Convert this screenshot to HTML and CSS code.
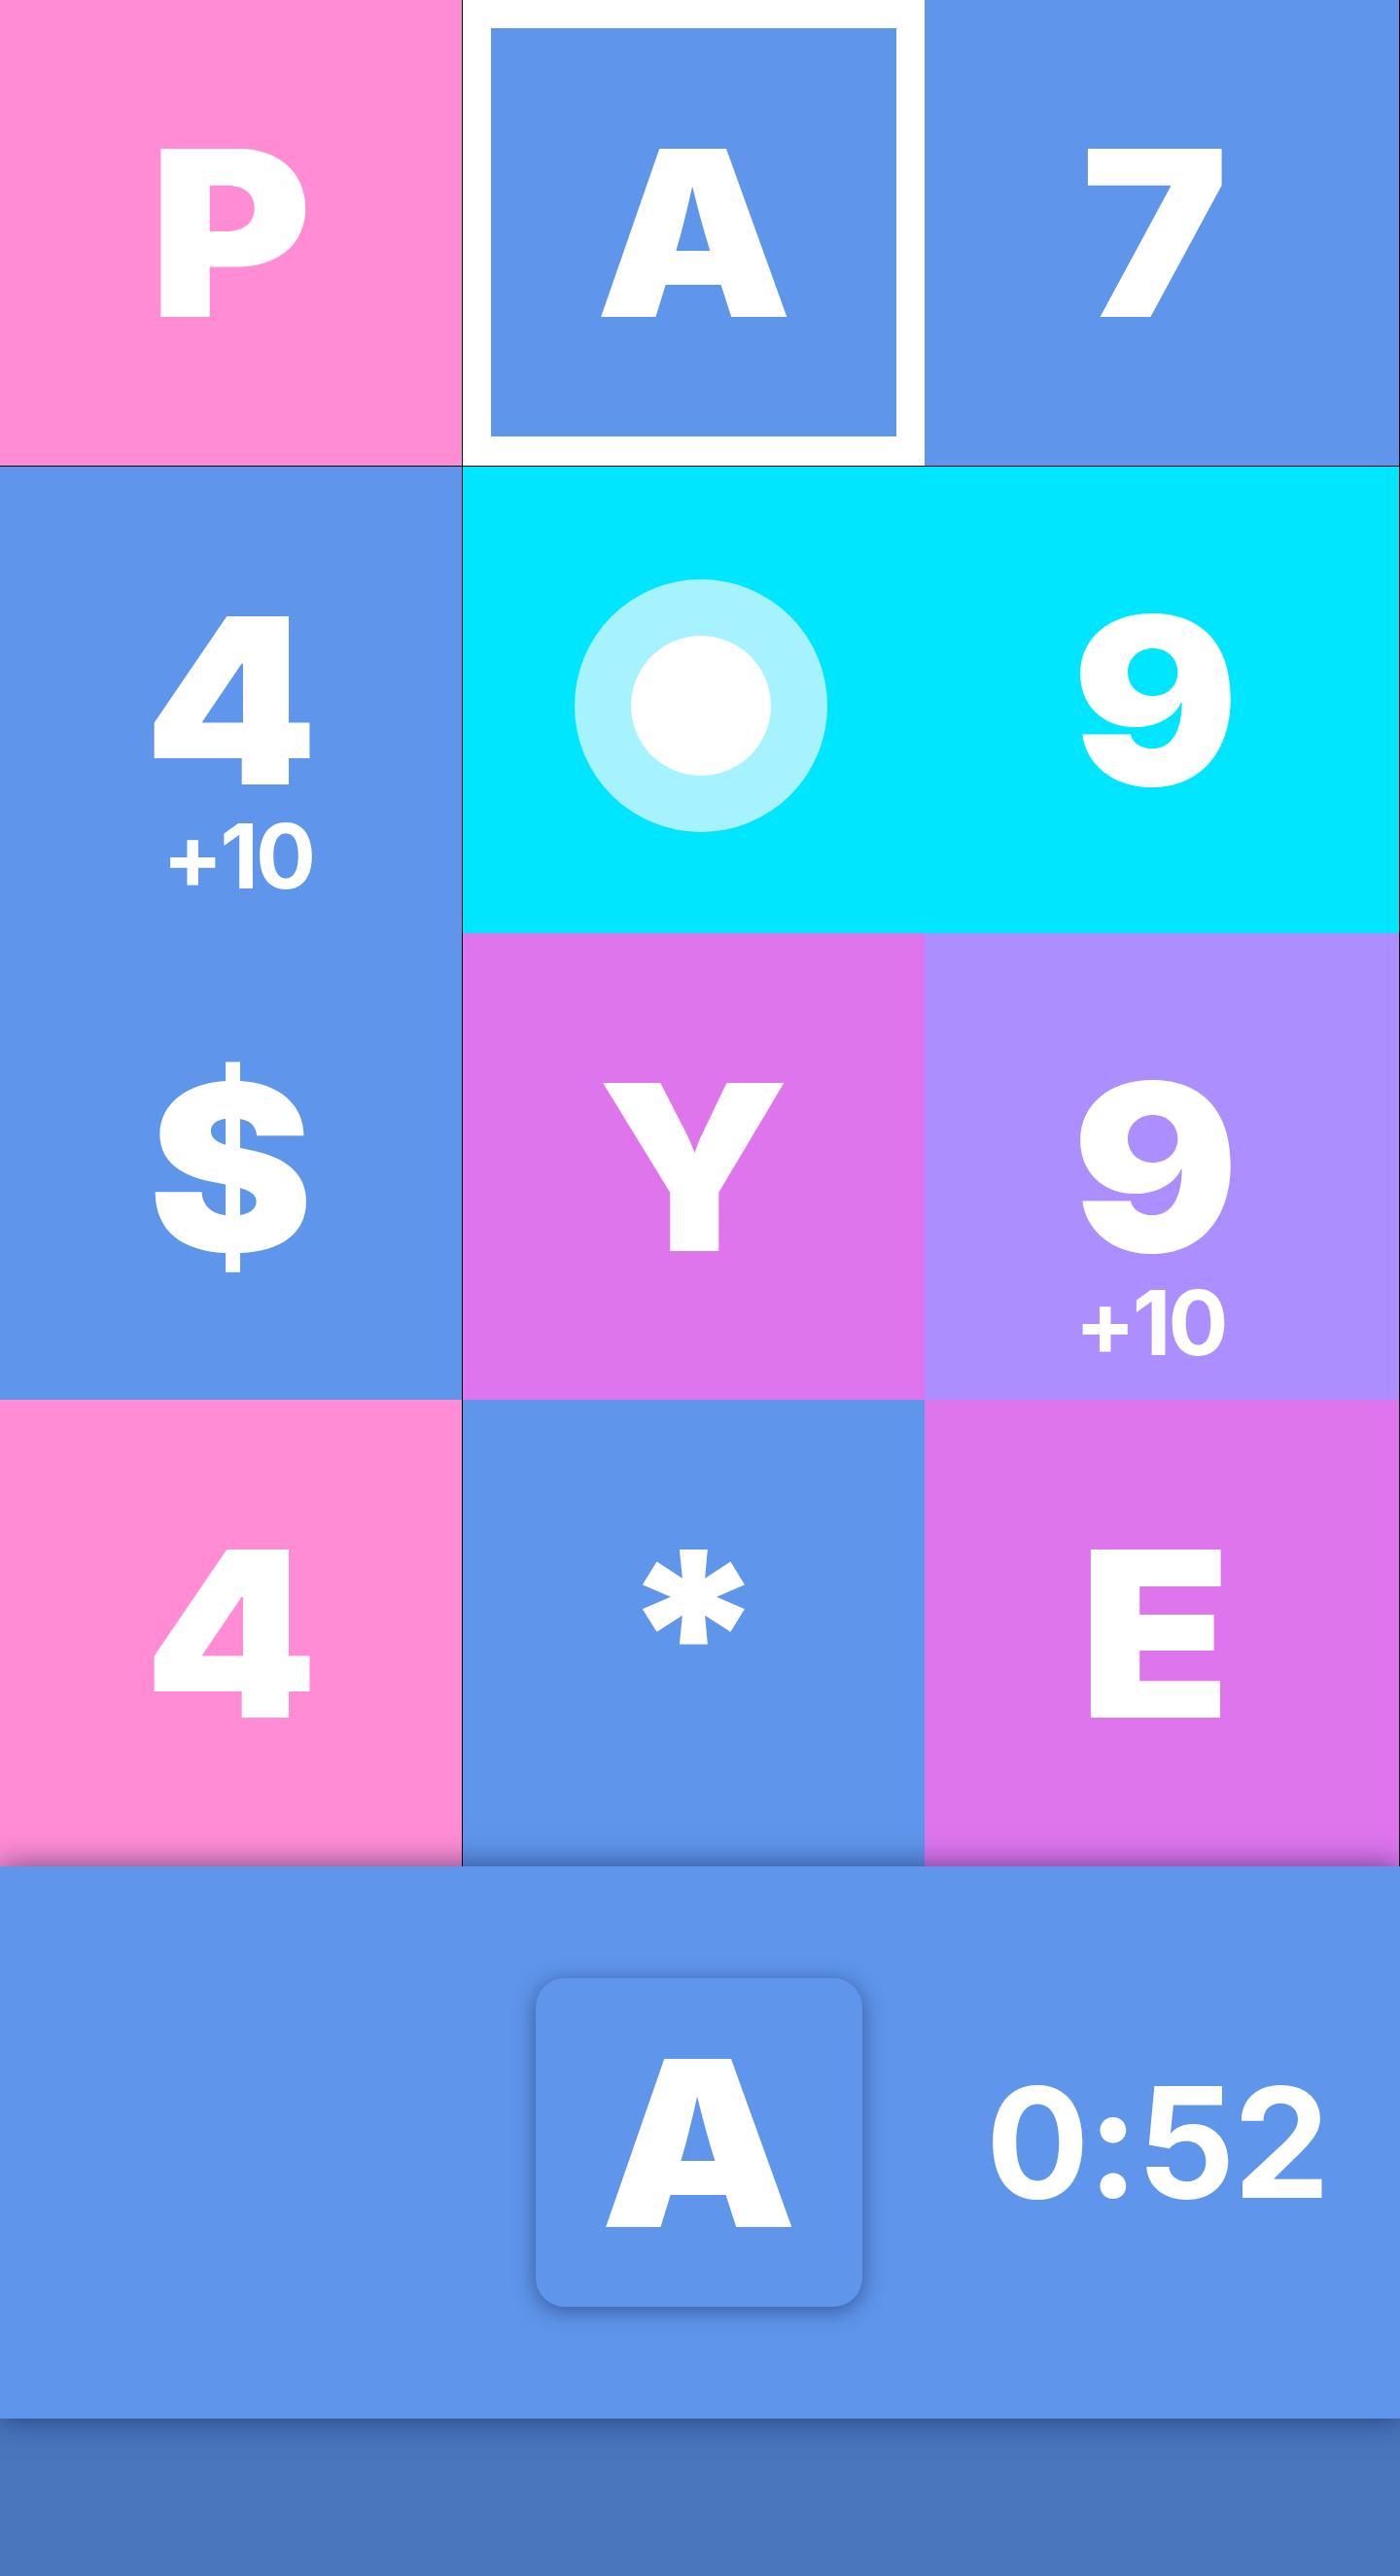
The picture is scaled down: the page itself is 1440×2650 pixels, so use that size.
FILE: index.html
```html
<!DOCTYPE html>
<html lang="en">
<head>
<meta charset="utf-8">
<title>Letter Board</title>
<link rel="stylesheet" href="styles.css">
</head>
<body>
<main class="game">
  <section class="board">
    <div class="tile pink col1 top"><span class="glyph">P</span></div>
    <div class="tile blue selected top"><span class="frame"><span class="glyph">A</span></span></div>
    <div class="tile blue col3 top"><span class="glyph">7</span></div>

    <div class="tile blue col1"><span class="glyph">4</span><span class="bonus">+10</span></div>
    <div class="tile cyan">
      <svg class="ring" width="260" height="260" viewBox="0 0 260 260" aria-hidden="true">
        <circle cx="130" cy="130" r="130" fill="#a6f2ff"/>
        <circle cx="130" cy="130" r="72" fill="#ffffff"/>
      </svg>
    </div>
    <div class="tile cyan col3"><span class="glyph">9</span></div>

    <div class="tile blue col1"><span class="glyph">$</span></div>
    <div class="tile magenta"><span class="glyph">Y</span></div>
    <div class="tile lavender col3"><span class="glyph">9</span><span class="bonus">+10</span></div>

    <div class="tile pink col1"><span class="glyph">4</span></div>
    <div class="tile blue"><span class="glyph">*</span></div>
    <div class="tile magenta col3"><span class="glyph">E</span></div>
  </section>

  <section class="panel">
    <div class="slot"></div>
    <div class="slot">
      <div class="card"><span class="glyph">A</span></div>
    </div>
    <div class="slot">
      <div class="timer">0:52</div>
    </div>
  </section>

  <footer class="footer"></footer>
</main>
</body>
</html>
```

FILE: styles.css
```css
* {
  box-sizing: border-box;
}

html, body {
  margin: 0;
  padding: 0;
}

body {
  width: 1440px;
  height: 2650px;
  overflow: hidden;
  font-family: Inter, "Noto Sans", "Liberation Sans", sans-serif;
  color: #ffffff;
  background: #4976bd;
}

.game {
  display: flex;
  flex-direction: column;
  width: 1440px;
}

.board {
  display: grid;
  grid-template-columns: 476px 475px 488px;
  grid-template-rows: repeat(4, 480px);
  width: 1440px;
  border-right: 1px solid #000000;
}

.tile {
  position: relative;
  display: flex;
  align-items: center;
  justify-content: center;
  font-size: 238px;
  font-weight: 900;
  line-height: 0.8;
}

.glyph {
  display: inline-block;
  transform: scaleX(1.07);
}

.col1 {
  border-right: 1px solid #000000;
}

.col3 {
  padding-right: 14px;
}

.top {
  border-bottom: 1px solid #000000;
}

.pink { background: #ff8cd4; }
.blue { background: #5f95ea; }
.cyan { background: #00e6ff; }
.magenta { background: #de75ed; }
.lavender { background: #ac8eff; }

.selected {
  background: #ffffff;
  padding: 29px 29px 30px;
}

.frame {
  display: flex;
  align-items: center;
  justify-content: center;
  width: 100%;
  height: 100%;
  background: #5f95ea;
}

.ring {
  display: block;
  margin: 12px 0 0 14px;
}

.bonus {
  position: absolute;
  left: 0;
  right: 0;
  top: calc(50% + 124px);
  text-align: center;
  font-size: 92px;
  font-weight: 700;
  line-height: 0.8;
  letter-spacing: -3px;
}

.col1 .bonus {
  left: 14px;
}

.col3 .bonus {
  right: 24px;
}

.panel {
  position: relative;
  z-index: 1;
  display: grid;
  grid-template-columns: repeat(3, 1fr);
  align-items: center;
  height: 568px;
  background: #5f95ea;
  box-shadow: 0 0 30px rgba(10, 25, 70, 0.6);
}

.slot {
  display: flex;
  align-items: center;
  justify-content: center;
}

.card {
  display: flex;
  align-items: center;
  justify-content: center;
  width: 336px;
  height: 338px;
  border-radius: 30px;
  background: #5f95ea;
  box-shadow: 0 4px 22px rgba(20, 40, 90, 0.55);
  font-size: 238px;
  font-weight: 900;
  line-height: 0.8;
  margin-left: -2px;
}

.timer {
  font-size: 158px;
  font-weight: 700;
  line-height: 1;
  letter-spacing: -2px;
  margin-right: 20px;
}

.footer {
  height: 162px;
  background: #4976bd;
}
```
